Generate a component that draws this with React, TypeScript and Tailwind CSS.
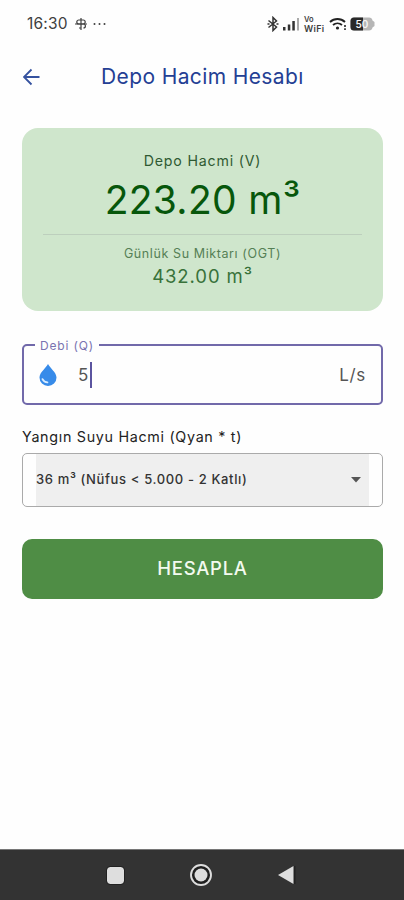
import React from "react";

function StatusBar() {
  return (
    <div className="flex h-[48px] items-center justify-between pl-[27px] pr-[28px] text-[#3f3f3f]">
      <div className="flex items-center">
        <span className="w-[47px] text-[15.500px] leading-[20px] tracking-[0.200px]">16:30</span>
        <svg className="h-[14px] w-[14px]" viewBox="0 0 14 14" fill="none" stroke="currentColor" strokeWidth="1.200">
          <path d="M7 1v12M1 7h12" />
          <path d="M7 3h2.200a2 2 0 0 1 0 4H4.800a2 2 0 0 1 0-4H7M7 7h2.400a2 2 0 0 1 0 4M7 11H5" />
        </svg>
        <svg className="ml-[5px] h-[4px] w-[13px]" viewBox="0 0 13 4" fill="currentColor">
          <circle cx="1.500" cy="2" r="1" />
          <circle cx="6.500" cy="2" r="1" />
          <circle cx="11.500" cy="2" r="1" />
        </svg>
      </div>
      <div className="flex items-center">
        <svg className="h-[16px] w-[12px]" viewBox="0 0 12 16" fill="none" stroke="#333" strokeWidth="1.500">
          <path d="M1.500 4.500 9.500 11 6 14.500v-13L9.500 5 1.500 11.500" />
          <path d="M0.500 8h2M9.500 8h2" />
        </svg>
        <svg className="ml-[4px] h-[14px] w-[17px]" viewBox="0 0 17 14">
          <path d="M0 10h2.500v3.500H0zM4.800 7.500h2.500v6H4.800zM9.300 4h2.500v9.500H9.300z" fill="#333" />
          <path d="M14 1h2v12.500h-2z" fill="#aaa" />
        </svg>
        <div className="ml-[4px] w-[22px] font-semibold">
          <div className="h-[8px] text-[7.500px] leading-[8px]">Vo</div>
          <div className="h-[9px] text-[9px] leading-[9px] tracking-[0.300px]">WiFi</div>
        </div>
        <svg className="ml-[3px] h-[14px] w-[18px]" viewBox="0 0 18 14" fill="none" stroke="#222" strokeWidth="1.900">
          <path d="M1 5a11 11 0 0 1 15 0M4 8a7 7 0 0 1 9 0" />
          <circle cx="8.500" cy="11" r="1.600" fill="#222" stroke="none" />
          <path d="M16 8v2M16 11.300v1.700" strokeWidth="1.600" />
        </svg>
        <svg className="ml-[3px] h-[14px] w-[26px]" viewBox="0 0 26 14">
          <path d="M4 .5h15q3 0 3.500 3l2 1.500v4l-2 1.500q-.5 3-3.500 3H4q-3.500 0-3.500-3.500V4Q.5.500 4 .500z" fill="#b6b6b6" />
          <path d="M4 .5h9v13H4Q.5 13.500.5 10V4Q.5.500 4 .500z" fill="#292929" />
          <text x="12" y="10.700" textAnchor="middle" fontFamily="Inter" fontWeight="600" fontSize="10" fill="#f5f5f5">50</text>
        </svg>
      </div>
    </div>
  );
}

function ResultCard() {
  return (
    <section className="ml-[22px] mr-[21px] mt-[23px] flex h-[183px] flex-col items-center rounded-[16px] bg-[#cfe6cc] px-[21px]">
      <div className="mt-[23px] h-[20px] whitespace-nowrap text-[14.200px] leading-[20px] tracking-[0.800px] text-[#2f5a32]">Depo Hacmi (V)</div>
      <div className="h-[57px] whitespace-nowrap text-[39px] font-normal leading-[57px] tracking-[0.300px] text-[#07570b]">223.20 m³</div>
      <div className="mt-[6px] h-px w-full bg-[#bdcfbd]" />
      <div className="mt-[9px] h-[20px] whitespace-nowrap text-[12.500px] leading-[20px] tracking-[0.600px] text-[#557f55]">Günlük Su Miktarı (OGT)</div>
      <div className="h-[25px] whitespace-nowrap text-[18.500px] leading-[25px] tracking-[0.900px] text-[#38723a]">432.00 m³</div>
    </section>
  );
}

function FlowField() {
  return (
    <fieldset className="ml-[22px] mr-[21px] mt-[27px] h-[67px] min-w-0 rounded-[5px] border-2 border-[#7169aa] pl-[11px]">
      <legend className="h-[14px] whitespace-nowrap px-[5px] text-[12px] leading-[15px] tracking-[0.850px] text-[#7973b0]">Debi (Q)</legend>
      <div className="flex h-[45px] items-center pr-[15px] text-[#555]">
        <svg className="ml-[4px] h-[24px] w-[18px] shrink-0" viewBox="0 0 18 24">
          <path d="M9 1C7 5 .500 9.500.500 14.500a8.500 8.500 0 0 0 17 0C17.500 9.500 11 5 9 1z" fill="#378be9" />
          <path d="M3.500 16.200q1.500 3 4.900 3.200" fill="none" stroke="#d8ecff" strokeWidth="1.900" strokeLinecap="round" />
        </svg>
        <span className="ml-[21px] pt-[2px] text-[17px] tracking-[0.300px]">5</span>
        <span className="ml-px h-[26px] w-[2px] bg-[#5b549f]" />
        <span className="ml-auto pt-[2px] text-[17px] tracking-[0.700px]">L/s</span>
      </div>
    </fieldset>
  );
}

function VolumeSelect() {
  return (
    <div className="ml-[22px] mr-[21px] mt-[20px]">
      <div className="h-[24px] whitespace-nowrap text-[14.300px] leading-[24px] tracking-[0.700px] text-[#222]">Yangın Suyu Hacmi (Qyan * t)</div>
      <div className="mt-[4px] h-[54px] rounded-[5px] border border-[#aaa] px-[13px]">
        <div className="flex h-full items-center justify-between bg-[#efefef] pr-[8px]">
          <span className="whitespace-nowrap text-[13px] font-medium tracking-[0.640px] text-[#333]">36 m³ (Nüfus &lt; 5.000 - 2 Katlı)</span>
          <svg className="h-[6px] w-[10px]" viewBox="0 0 10 6"><path d="M0 0h10L5 5.500z" fill="#555" /></svg>
        </div>
      </div>
    </div>
  );
}

export default function App() {
  return (
    <div className="flex h-[900px] w-[404px] flex-col overflow-hidden bg-[#fefefe] font-['Inter',sans-serif]">
      <StatusBar />
      <header className="flex h-[57px] items-center pl-[23px]">
        <svg className="h-[18px] w-[17px]" viewBox="0 0 17 18" fill="none" stroke="#35529f" strokeWidth="1.800">
          <path d="M16.500 9H1M8.500 1.500 1 9l7.500 7.500" />
        </svg>
        <h1 className="ml-[61px] whitespace-nowrap text-[21px] leading-[28px] tracking-[0.380px] text-[#243f94]">Depo Hacim Hesabı</h1>
      </header>
      <ResultCard />
      <FlowField />
      <VolumeSelect />
      <button className="ml-[22px] mr-[21px] mt-[32px] h-[60px] shrink-0 rounded-[10px] bg-[#4f8d45] text-[18.500px] font-medium tracking-[0.700px] text-[#f3faef]">HESAPLA</button>
      <nav className="mt-auto flex h-[51px] items-center border-t border-[#777] bg-[#333] pl-[107px]">
        <span className="h-[17px] w-[17px] rounded-[3px] bg-[#dedede] outline outline-[#222]" />
        <svg className="ml-[65px] h-[24px] w-[24px]" viewBox="0 0 24 24">
          <circle cx="12" cy="12" r="10" fill="#1f1f1f" stroke="#ddd" strokeWidth="1.900" />
          <circle cx="12" cy="12" r="6.500" fill="#ddd" />
        </svg>
        <svg className="ml-[65px] h-[20px] w-[18px]" viewBox="0 0 18 20"><path d="M16.500 1v18" stroke="#222" strokeWidth="2" /><path d="M15.500 1v18L0 10z" fill="#dedede" /></svg>
      </nav>
    </div>
  );
}
